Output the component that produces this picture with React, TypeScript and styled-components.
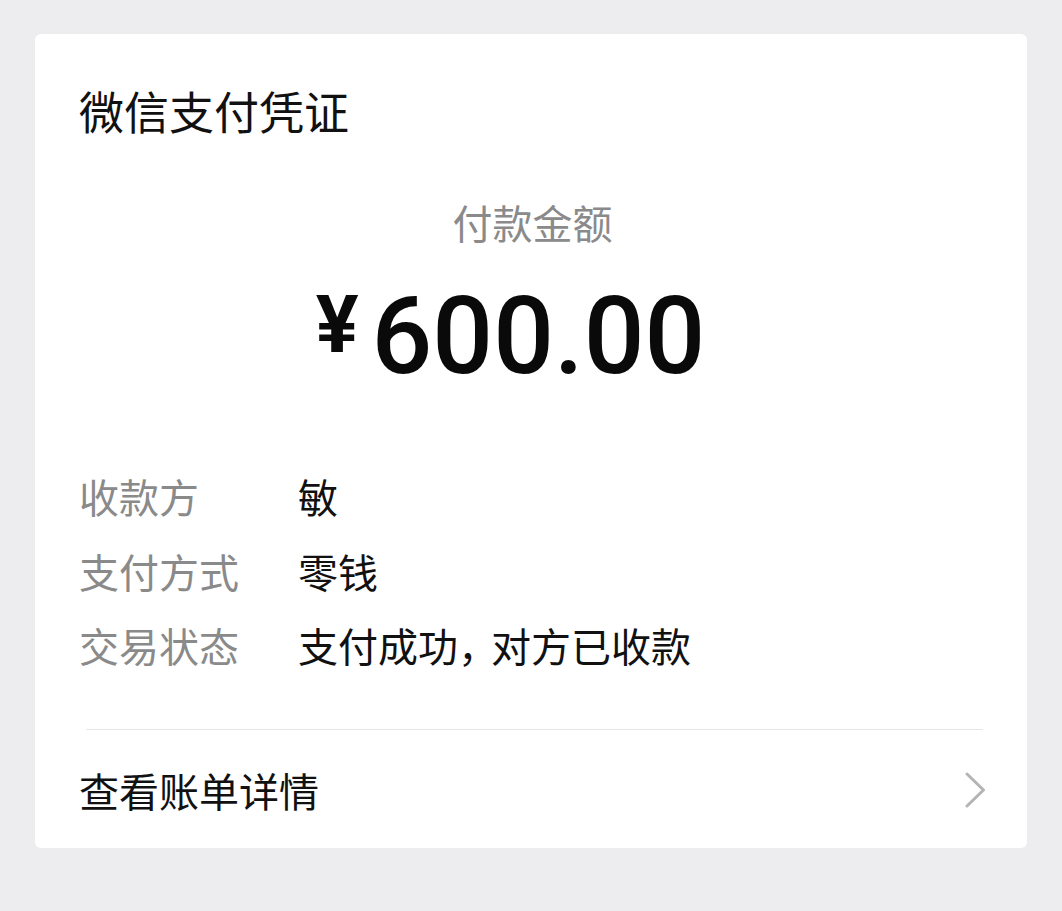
import React from "react";
import styled, { createGlobalStyle } from "styled-components";

const Global = createGlobalStyle`
  html, body { margin: 0; padding: 0; background: #ededf0; }
  body { font-family: "Noto Sans CJK SC", "Noto Sans", sans-serif; }
`;

const Page = styled.div`
  padding: 34px 35px 64px 35px;
  background: #ededf0;
  min-height: 911px;
  box-sizing: border-box;
`;

const Card = styled.div`
  background: #ffffff;
  border-radius: 6px;
  padding: 50px 41px 34px 44px;
  display: flex;
  flex-direction: column;
`;

const Title = styled.div`
  font-size: 45px;
  line-height: 54px;
  color: #111;
`;

const AmountLabel = styled.div`
  margin-top: 60px;
  font-size: 40px;
  line-height: 48px;
  color: #8a8a8a;
  text-align: center;
`;

const Amount = styled.div`
  margin-top: 37px;
  display: flex;
  justify-content: center;
  align-items: flex-start;
  padding-right: 44px;
  font-family: Roboto, "Liberation Sans", sans-serif;
  color: #0a0a0a;
`;

const Currency = styled.span`
  font-size: 80px;
  line-height: 80px;
  font-weight: 700;
  margin-top: 2px;
  margin-right: 13px;
`;

const Digits = styled.span`
  font-size: 107px;
  line-height: 107px;
  font-weight: 500;
`;

const Rows = styled.div`
  margin-top: 69px;
  display: flex;
  flex-direction: column;
`;

const Row = styled.div`
  display: flex;
  font-size: 40px;
  line-height: 74.5px;
`;

const Label = styled.span`
  width: 219px;
  color: #8a8a8a;
  flex-shrink: 0;
`;

const Value = styled.span`
  color: #111;
`;

const Comma = styled.span`
  letter-spacing: -7px;
`;

const Divider = styled.div`
  margin: 46px 3px 0 7px;
  height: 1px;
  background: #e6e6e6;
`;

const LinkRow = styled.div`
  margin-top: 36px;
  display: flex;
  align-items: center;
  justify-content: space-between;
  font-size: 40px;
  line-height: 48px;
  color: #111;
`;

const Chevron = styled.svg`
  width: 21px;
  height: 36px;
  display: block;
`;

export default function App() {
  return (
    <>
      <Global />
      <Page>
        <Card>
          <Title>微信支付凭证</Title>
          <AmountLabel>付款金额</AmountLabel>
          <Amount>
            <Currency>¥</Currency>
            <Digits>600.00</Digits>
          </Amount>
          <Rows>
            <Row>
              <Label>收款方</Label>
              <Value>敏</Value>
            </Row>
            <Row>
              <Label>支付方式</Label>
              <Value>零钱</Value>
            </Row>
            <Row>
              <Label>交易状态</Label>
              <Value>
                支付成功<Comma>，</Comma>对方已收款
              </Value>
            </Row>
          </Rows>
          <Divider />
          <LinkRow>
            <span>查看账单详情</span>
            <Chevron viewBox="0 0 21 36">
              <path d="M2 2 L18.5 18 L2 34" fill="none" stroke="#b4b4b4" strokeWidth="3" strokeLinecap="round" strokeLinejoin="round" />
            </Chevron>
          </LinkRow>
        </Card>
      </Page>
    </>
  );
}
